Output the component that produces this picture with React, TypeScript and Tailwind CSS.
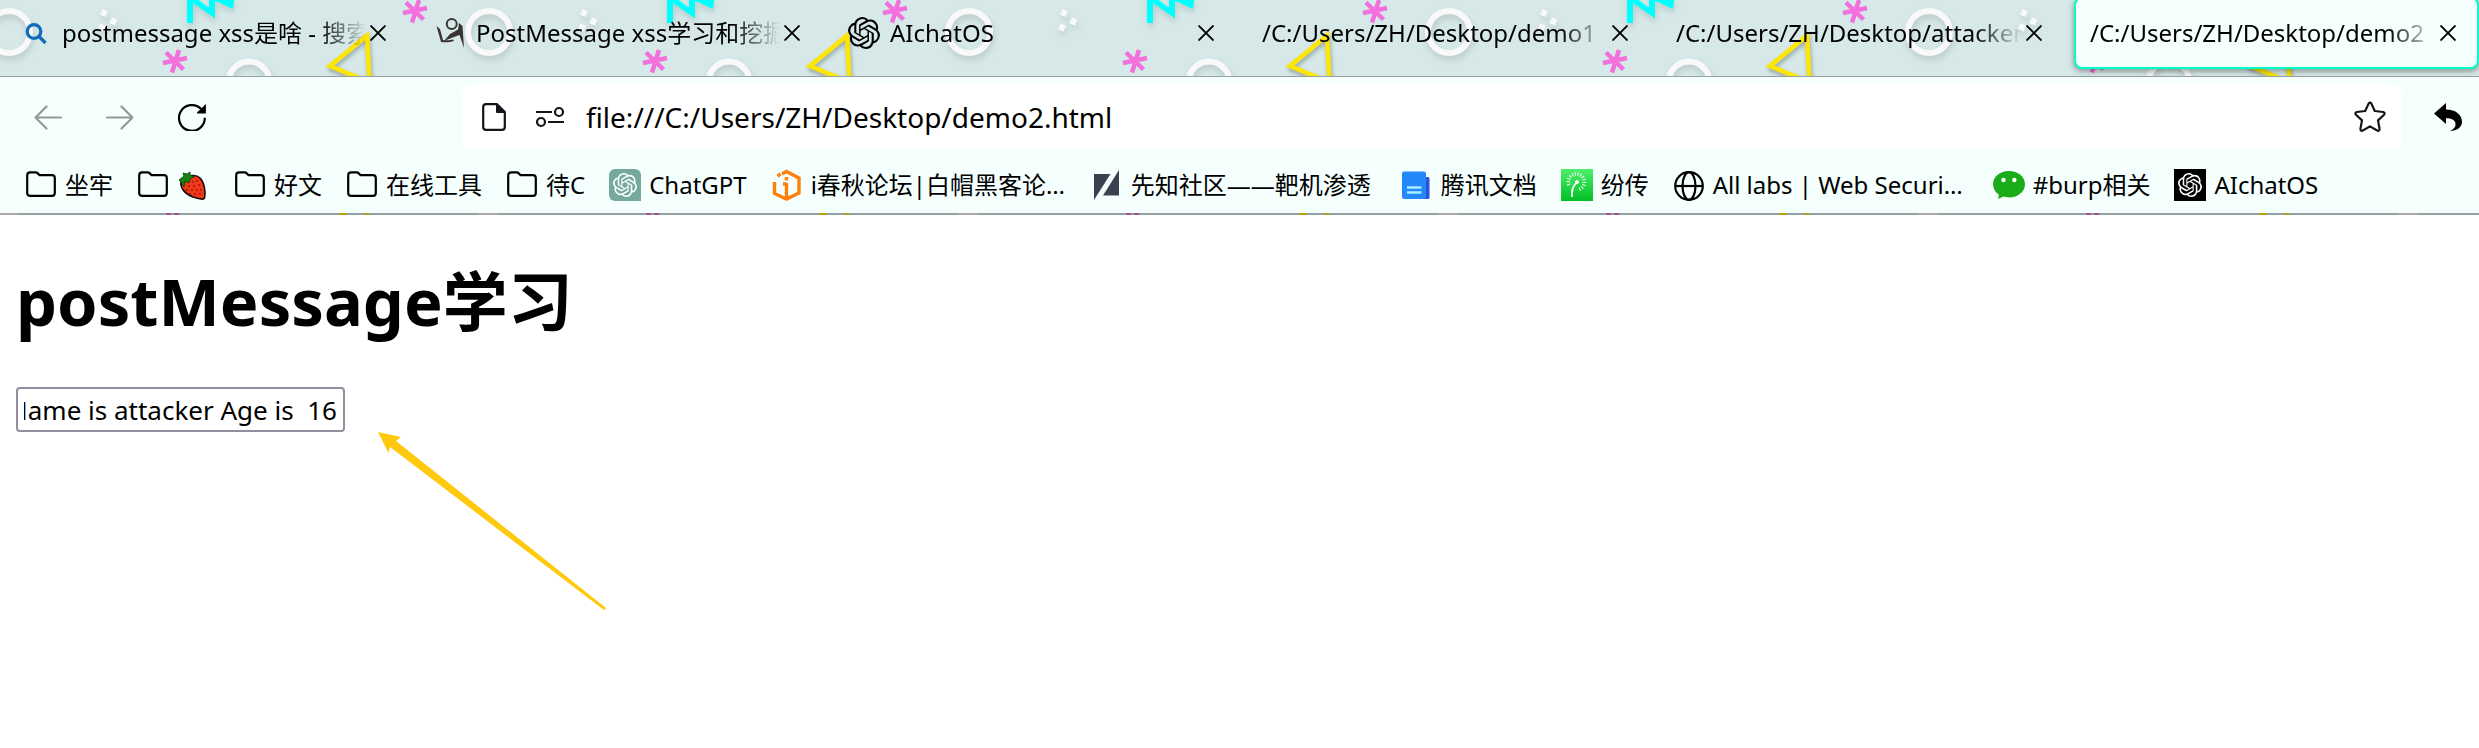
import React from "react";
import { SiOpenai } from "react-icons/si";

function Asterisk({ x, y }: { x: number; y: number }) {
  return (
    <path
      transform={`translate(${x} ${y})`}
      d="M4 -11 L-3 11.5 M-12 2 L12 -3 M-9 -8.500 L8.500 8.500"
      stroke="#f26fdc"
      strokeWidth="4.500"
      fill="none"
    />
  );
}

function Confetti() {
  return (
    <svg className="absolute inset-0 h-full w-full" aria-hidden="true">
      <defs>
        <pattern id="confetti" width="480" height="215" patternUnits="userSpaceOnUse">
          <rect width="480" height="215" fill="#d6e9e8" />
          <g style={{ filter: "drop-shadow(1px 4px 3px rgba(0,0,0,0.14))" }}>
            <circle cx="9" cy="32" r="21" fill="none" stroke="#f9f9f9" strokeWidth="6" />
            <circle cx="489" cy="32" r="21" fill="none" stroke="#f9f9f9" strokeWidth="6" />
            <circle cx="249" cy="82" r="20.500" fill="none" stroke="#f9f9f9" strokeWidth="6" />
            <rect x="-3" y="-3" width="6" height="6" fill="#f9f9f9" transform="translate(104 13) rotate(22)" />
            <rect x="-3" y="-3" width="6" height="6" fill="#f9f9f9" transform="translate(113.500 21.500) rotate(22)" />
            <rect x="-3" y="-3" width="6" height="6" fill="#f9f9f9" transform="translate(102 27.500) rotate(22)" />
            <path d="M187 -6 V23 H193 V3 L215 18.500 V-6 H209 V8 L196 -2 V-6 Z M211 -1 L233 9 L234.500 -1 Z" fill="#00ffff" />
          </g>
          <g style={{ filter: "drop-shadow(1px 3px 2px rgba(0,0,0,0.3))" }}>
            <path d="M330 66 L367 35.500 L369.500 82 Z" fill="none" stroke="#ffe600" strokeWidth="4.500" />
          </g>
          <Asterisk x={415} y={11} />
          <Asterisk x={175} y={61} />
          <rect x="0" y="210" width="18" height="5" fill="#f9f0f0" />
          <rect x="478" y="210" width="2" height="5" fill="#f9f0f0" />
          <rect x="166" y="210" width="5" height="5" fill="#f26fdc" />
          <rect x="174" y="210" width="5" height="5" fill="#f26fdc" />
          <rect x="339" y="210" width="7" height="5" fill="#ffe600" />
          <rect x="365" y="210" width="4" height="5" fill="#ffe600" />
        </pattern>
      </defs>
      <rect width="100%" height="100%" fill="url(#confetti)" />
    </svg>
  );
}

function SearchIcon() {
  return (
    <svg viewBox="0 0 32 32" className="size-8" fill="none" stroke="#0f6cbd" strokeWidth="3.200">
      <circle cx="14" cy="14.500" r="6.800" />
      <path d="M19 19.500 L25.500 26" strokeWidth="3.400" />
    </svg>
  );
}

function FigureIcon() {
  return (
    <svg viewBox="0 0 32 32" className="size-8" fill="#3a3532">
      <circle cx="17.700" cy="7" r="5" fill="none" stroke="#3a3532" strokeWidth="2" />
      <path d="M2.500 9 L6 12 L9 23 C13 23.500 17 23 19 22.500 L20 24 C16 25.500 11 25.500 7 25 Z" />
      <path d="M25 6 L28.500 9 L30 31 L25.500 18 L20 20 L10 24 L16 17 L24 12.500 Z" />
    </svg>
  );
}

function CloseIcon() {
  return (
    <svg viewBox="0 0 16 16" className="size-4" stroke="#000" strokeWidth="1.900" fill="none">
      <path d="M0.500 0.500 L15.500 15.500 M15.500 0.500 L0.500 15.500" />
    </svg>
  );
}

function FolderIcon() {
  return (
    <svg viewBox="0 0 32 32" className="size-8" fill="none" stroke="#000" strokeWidth="2.200" strokeLinejoin="round">
      <path d="M2.200 6.500 Q2.200 3.400 5.200 3.400 H10.500 Q11.800 3.400 12.800 4.400 L14.600 6.200 H27 Q29.800 6.200 29.800 9 V24 Q29.800 26.800 27 26.800 H5.200 Q2.200 26.800 2.200 24 Z" />
    </svg>
  );
}

function StrawberryIcon() {
  return (
    <svg viewBox="0 0 33 32" className="h-8 w-[33px]">
      <path d="M4 13 C8 7 18 4 23 9 C27 13 29 22 27.500 29 C27 31 22 30 16 28 C8 25 3 19 4 13 Z" fill="#f03a17" stroke="#1a0a0a" strokeWidth="1.600" />
      <g fill="#a01010">
        {[[12, 17], [17, 17], [22, 16], [10, 21], [15, 21], [20, 21], [24, 21], [13, 25], [18, 25], [23, 25], [20, 12], [16, 13]].map(([x, y]) => (
          <circle key={`${x}-${y}`} cx={x} cy={y} r="0.900" />
        ))}
      </g>
      <path d="M2 11 L7 7 L6 4 L10 5 L13 3 L13 6 L17 8 L13 10 L12 14 L8 12 L7 18 L4 13 Z" fill="#16820f" stroke="#0b3d08" strokeWidth="0.800" />
    </svg>
  );
}

function ChatGptIcon() {
  return (
    <span className="flex size-8 items-center justify-center rounded-t-md rounded-bl-md bg-[#75a99b]">
      <SiOpenai className="size-6 text-white" />
    </span>
  );
}

function HexIcon() {
  return (
    <svg viewBox="0 0 32 32" className="size-8" fill="none" stroke="#ff7f0a" strokeWidth="3.400">
      <path d="M11 5 L15.500 2.500 L28 9 V24 L15.500 30 L3.500 24.500 V13 M9.500 5 L6.500 7" />
      <path d="M15.500 14 V30 M15.500 8 V11.500 M12 15 H15.500" />
    </svg>
  );
}

function SlashIcon() {
  return (
    <svg viewBox="0 0 32 32" className="size-8" fill="#3c4152">
      <path d="M3 5 H19.500 L3 31 Z M28 1 V26.500 H12 Z" />
    </svg>
  );
}

function DocsIcon() {
  return (
    <svg viewBox="0 0 32 32" className="size-8">
      <rect x="16" y="8" width="12.500" height="22" rx="1.500" fill="#2a53e0" />
      <rect x="1" y="2.500" width="24" height="27.500" rx="2" fill="#2488fb" />
      <path d="M6 18.500 H20.500 M6 23.500 H20.500" stroke="#a8ecff" strokeWidth="2.600" />
    </svg>
  );
}

function DandelionIcon() {
  return (
    <svg viewBox="0 0 32 32" className="size-8">
      <defs>
        <linearGradient id="leaf" x1="0" y1="0" x2="0" y2="1">
          <stop offset="0" stopColor="#4cf06c" />
          <stop offset="1" stopColor="#02bf24" />
        </linearGradient>
      </defs>
      <rect width="32" height="32" fill="url(#leaf)" />
      <path d="M11 28 C10.500 21 12 16 16 13.500" stroke="#fff" strokeWidth="1.800" fill="none" />
      <circle cx="16" cy="13" r="2" fill="#fff" />
      <path d="M8 16 A8 8 0 1 1 18 20.500" stroke="#fff" strokeWidth="3.600" strokeDasharray="1 1.800" fill="none" />
    </svg>
  );
}

function GlobeIcon() {
  return (
    <svg viewBox="0 0 32 32" className="size-8" fill="none" stroke="#000" strokeWidth="2.200">
      <circle cx="16" cy="17" r="13.800" />
      <ellipse cx="16" cy="17" rx="6.500" ry="13.800" />
      <path d="M2 17 H30" />
    </svg>
  );
}

function WeChatIcon() {
  return (
    <svg viewBox="0 0 32 32" className="size-8">
      <path d="M16 2 C7 2 0 7.800 0 15.200 C0 19.500 2.300 23.200 6 25.700 L5 30 L10.500 27.600 C12.200 28.100 14 28.400 16 28.400 C25 28.400 32 22.500 32 15.200 C32 7.800 25 2 16 2 Z" fill="#1aad19" />
      <circle cx="10.500" cy="11" r="2.200" fill="#fff" />
      <circle cx="21.300" cy="11" r="2.200" fill="#fff" />
    </svg>
  );
}

function AiChatIcon() {
  return (
    <span className="flex size-8 items-center justify-center bg-black">
      <SiOpenai className="size-6 text-white" />
    </span>
  );
}

const tabs: { title: string; icon?: React.ReactNode; active?: boolean }[] = [
  { title: "postmessage xss是啥 - 搜索", icon: <SearchIcon /> },
  { title: "PostMessage xss学习和挖掘", icon: <FigureIcon /> },
  { title: "AIchatOS", icon: <SiOpenai className="size-8" /> },
  { title: "/C:/Users/ZH/Desktop/demo1" },
  { title: "/C:/Users/ZH/Desktop/attacker" },
  { title: "/C:/Users/ZH/Desktop/demo2", active: true },
];

const bookmarks: { label: React.ReactNode; name?: string; icon: React.ReactNode; width?: string }[] = [
  { label: "坐牢", icon: <FolderIcon /> },
  { label: <StrawberryIcon />, name: "草莓", icon: <FolderIcon /> },
  { label: "好文", icon: <FolderIcon /> },
  { label: "在线工具", icon: <FolderIcon /> },
  { label: "待C", icon: <FolderIcon /> },
  { label: "ChatGPT", icon: <ChatGptIcon /> },
  { label: "i春秋论坛|白帽黑客论…", icon: <HexIcon />, width: "w-64" },
  { label: "先知社区——靶机渗透", icon: <SlashIcon />, width: "min-w-[246px]" },
  { label: "腾讯文档", icon: <DocsIcon /> },
  { label: "纷传", icon: <DandelionIcon /> },
  { label: "All labs | Web Securi…", icon: <GlobeIcon />, width: "w-64" },
  { label: "#burp相关", icon: <WeChatIcon /> },
  { label: "AIchatOS", icon: <AiChatIcon /> },
];

function TabStrip() {
  return (
    <div role="tablist" className="relative flex h-[77px] gap-[9px] overflow-hidden border-b border-[#93a19f] pl-1">
      {tabs.map((tab) => (
        <div
          key={tab.title}
          className={
            tab.active
              ? "-mt-[3px] flex h-[72px] min-w-0 flex-1 items-center rounded-lg border-2 border-[#00ffc8] bg-[#f5fffd] pr-[21px] pl-[14px] shadow-[0_2px_6px_rgba(0,0,0,0.4)]"
              : "-mt-[3px] flex h-[72px] min-w-0 flex-1 items-center pr-[23px] pl-4"
          }
        >
          <button
            type="button"
            role="tab"
            aria-selected={!!tab.active}
            className="flex min-w-0 flex-1 items-center gap-[10px] overflow-hidden text-left text-[24px] leading-9"
          >
            {tab.icon && <span className="shrink-0">{tab.icon}</span>}
            <span className="min-w-0 flex-1 overflow-hidden whitespace-nowrap [mask-image:linear-gradient(to_left,transparent,black_48px)]">
              {tab.title}
            </span>
          </button>
          <button type="button" aria-label="Close tab" className="ml-1 shrink-0">
            <CloseIcon />
          </button>
        </div>
      ))}
    </div>
  );
}

function NavBar() {
  return (
    <div className="flex items-center pt-2 pr-[17px] pl-[34px]">
      <div className="flex w-[428px] shrink-0 items-center gap-11">
        <button type="button" aria-label="Back">
          <svg viewBox="0 0 28 28" className="size-7" fill="none" stroke="#939998" strokeWidth="2.200" strokeLinecap="round" strokeLinejoin="round">
            <path d="M27 14.500 H1.500 M12.500 3.500 L1.500 14.500 L12.500 25.500" />
          </svg>
        </button>
        <button type="button" aria-label="Forward">
          <svg viewBox="0 0 28 28" className="size-7" fill="none" stroke="#939998" strokeWidth="2.200" strokeLinecap="round" strokeLinejoin="round">
            <path d="M1 14.500 H26.500 M15.500 3.500 L26.500 14.500 L15.500 25.500" />
          </svg>
        </button>
        <button type="button" aria-label="Reload">
          <svg viewBox="0 0 28 28" className="size-7" fill="none" stroke="#000" strokeWidth="2.200">
            <path d="M26.800 14.800 A12.900 12.900 0 1 1 23 5.800" />
            <path d="M27.900 1 V10.500 H19.500 Q18.500 10.200 19.200 9.200 Z" fill="#000" stroke="none" />
          </svg>
        </button>
      </div>
      <div className="flex h-16 min-w-0 flex-1 items-center rounded-lg bg-white pr-4 pl-5">
        <svg viewBox="0 0 24 28" className="h-7 w-6 shrink-0" fill="none" stroke="#15141a" strokeWidth="2.200" strokeLinejoin="round" aria-hidden="true">
          <path d="M1.200 4 Q1.200 1.200 4 1.200 H15 L22.800 9 V24 Q22.800 26.800 20 26.800 H4 Q1.200 26.800 1.200 24 Z" />
          <path d="M14.500 1.200 V9.500 H22.800 Z" fill="#15141a" strokeWidth="1" />
        </svg>
        <svg viewBox="0 0 28 28" className="ml-[30px] size-7 shrink-0" fill="none" stroke="#15141a" strokeWidth="2.200" aria-hidden="true">
          <path d="M0 9 H16 M12 19 H28" />
          <circle cx="23" cy="9" r="4" />
          <circle cx="5" cy="19" r="4" />
        </svg>
        <input
          type="text"
          aria-label="Address"
          defaultValue="file:///C:/Users/ZH/Desktop/demo2.html"
          className="ml-[22px] min-w-0 flex-1 bg-transparent text-[28px] leading-10 outline-none"
        />
        <button type="button" aria-label="Bookmark this page">
          <svg viewBox="0 0 32 32" className="size-8" fill="none" stroke="#15141a" strokeWidth="2.200" strokeLinejoin="round">
            <path d="M14.600 2.600 Q16 0.600 17.400 2.600 L20.800 10 L29.200 11 Q31.600 11.700 30 13.700 L24 19.400 L25.600 28 Q25.500 30.500 23.200 29.500 L16 25.400 L8.800 29.500 Q6.500 30.500 6.400 28 L8 19.400 L2 13.700 Q0.400 11.700 2.800 11 L11.200 10 Z" />
          </svg>
        </button>
      </div>
      <button type="button" aria-label="Undo" className="ml-8">
        <svg viewBox="0 0 28 28" className="size-7" fill="#000">
          <path d="M0 10.500 L12 0 V6.500 C22 6.500 28 12 28 19 C28 24 23 28 16 28 C20 26 22 23.500 21.500 20.500 C21 17 17.500 15.200 12 15.200 V21 Z" />
        </svg>
      </button>
    </div>
  );
}

function BookmarkBar() {
  return (
    <nav className="flex h-16 items-center gap-6 overflow-hidden pt-2 pl-[25px] text-[24px] leading-9 whitespace-nowrap">
      {bookmarks.map((item, index) => (
        <a key={index} href="#" aria-label={item.name} className="flex shrink-0 items-center gap-2">
          {item.icon}
          <span className={item.width}>{item.label}</span>
        </a>
      ))}
    </nav>
  );
}

export default function App() {
  const scrollToEnd = (el: HTMLInputElement | null) => {
    if (el) el.scrollLeft = el.scrollWidth;
  };

  return (
    <div className="min-h-screen bg-white font-['Noto_Sans','Noto_Sans_CJK_SC',sans-serif] text-black">
      <header className="relative pb-[2px]">
        <Confetti />
        <TabStrip />
        <div className="relative bg-[#f5fffd]">
          <NavBar />
          <BookmarkBar />
        </div>
        <div className="absolute inset-x-0 bottom-0 h-[2px] bg-black/30" />
      </header>
      <main className="relative px-4 pt-10">
        <h1 className="text-[65px] leading-[92px] font-bold">postMessage学习</h1>
        <input
          ref={scrollToEnd}
          type="text"
          aria-label="Message"
          defaultValue="Name is attacker Age is  16"
          className="mt-10 block h-[45px] w-[329px] rounded border-2 border-[#8f8f9d] bg-white px-[6px] text-[26px] leading-9 outline-none"
        />
        <svg viewBox="0 0 228 180" className="pointer-events-none absolute top-[217px] left-[378px] h-[180px] w-[228px]" fill="#ffc90e" aria-hidden="true">
          <path d="M0 0 L23 5 L18 9 L228 176 L226 178 L12 15 L10.500 21 Z" />
        </svg>
      </main>
    </div>
  );
}
